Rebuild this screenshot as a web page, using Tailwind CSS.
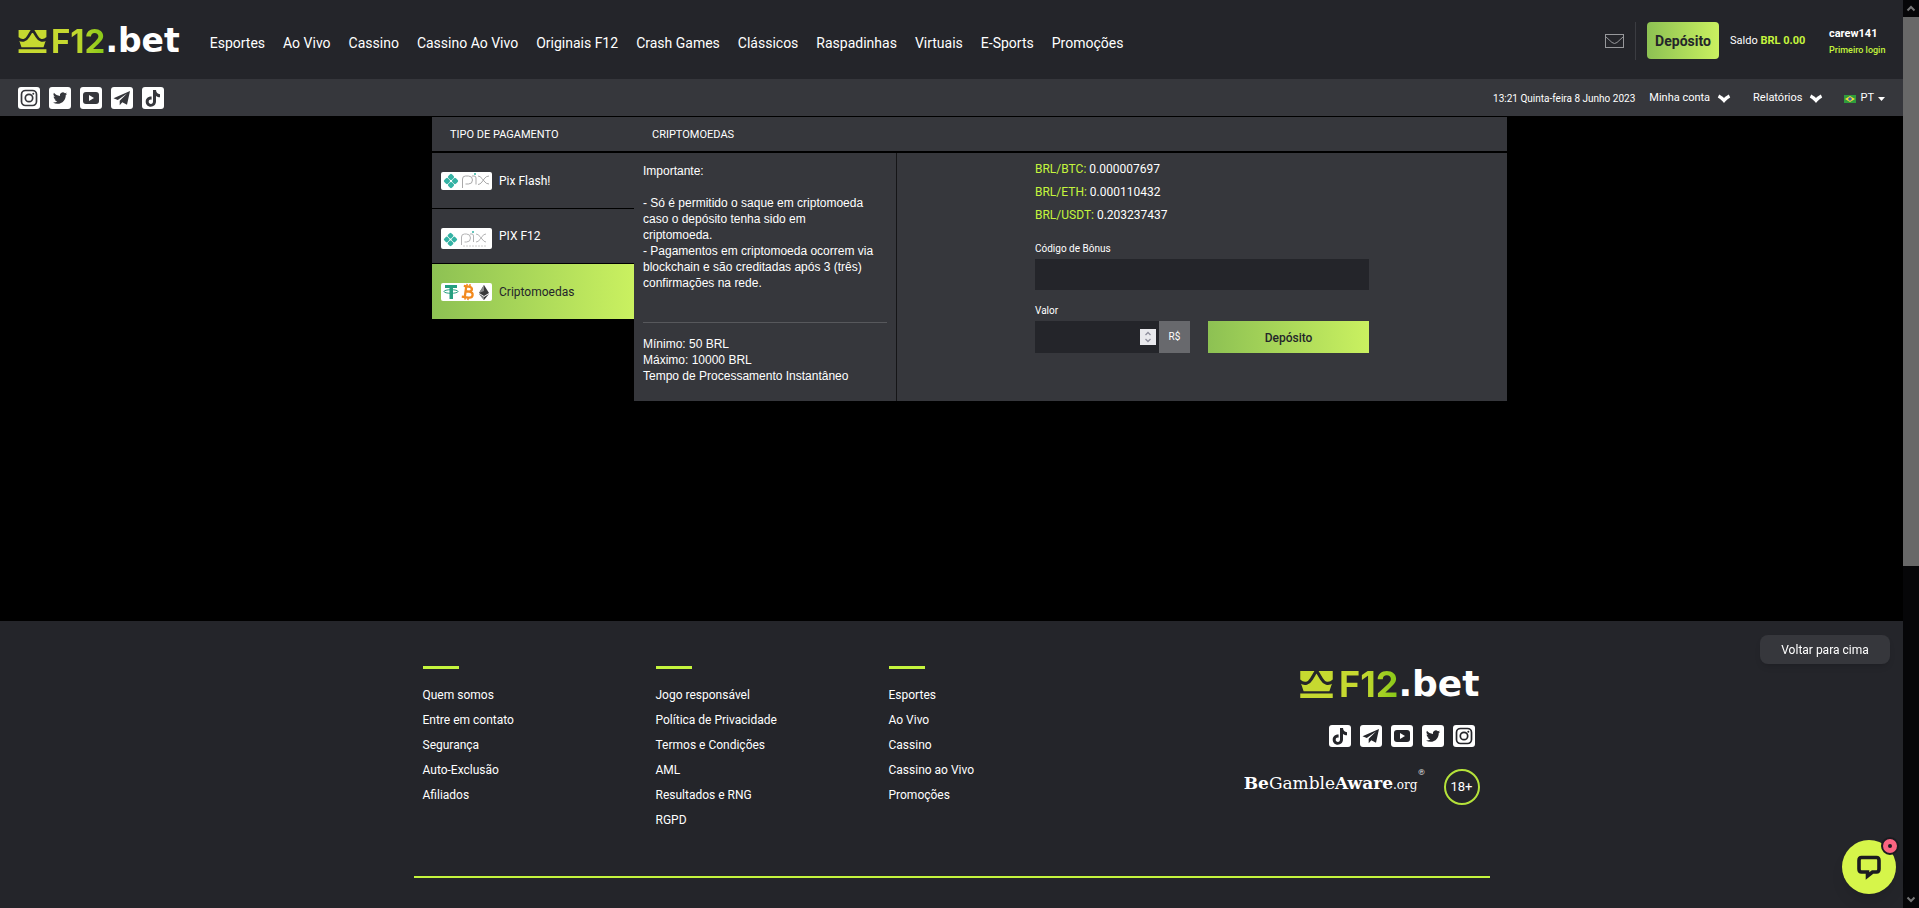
<!DOCTYPE html>
<html lang="pt">
<head>
<meta charset="utf-8">
<title>F12.bet - Depósito</title>
<script src="https://cdn.jsdelivr.net/npm/@tailwindcss/browser@4"></script>
</head>
<body class="bg-black font-[Roboto,sans-serif] text-xs text-white">
<svg class="hidden" aria-hidden="true">
  <symbol id="crown" viewBox="0 0 29 25">
    <path fill="#c6d930" d="M0 1h29v9l-3 9H3l-3-9zM0 21h29v4H0z"/>
    <path fill="none" stroke="#24252a" stroke-width="2.800" stroke-linejoin="round" d="M-1 9.500C4 14 8 11.500 10 8l4.500-7.500L19 8c2 3.500 6 6 11 1.500"/>
    <path fill="#24252a" d="M12 0h5l-2.500 3z"/>
  </symbol>
  <symbol id="instagram" viewBox="0 0 22 22">
    <rect width="22" height="22" rx="3" fill="#fff"/>
    <rect x="3.500" y="3.500" width="15" height="15" rx="4" fill="none" stroke="currentColor" stroke-width="1.700"/>
    <circle cx="11" cy="11" r="3.700" fill="none" stroke="currentColor" stroke-width="1.700"/><circle cx="15.300" cy="6.700" r="1" fill="currentColor"/>
  </symbol>
  <symbol id="twitter" viewBox="0 0 22 22">
    <rect width="22" height="22" rx="3" fill="#fff"/>
    <path fill="currentColor" transform="translate(4 4) scale(.59)" d="M23.950 4.570a10 10 0 0 1-2.820.770 4.960 4.960 0 0 0 2.160-2.720c-.950.550-2 .960-3.120 1.180a4.920 4.920 0 0 0-8.390 4.490C7.690 8.100 4.070 6.130 1.640 3.160a4.930 4.930 0 0 0 1.520 6.570 4.900 4.900 0 0 1-2.230-.610v.060a4.920 4.920 0 0 0 3.950 4.830 5 5 0 0 1-2.210.080 4.940 4.940 0 0 0 4.600 3.420A9.870 9.870 0 0 1 0 19.540a13.990 13.990 0 0 0 7.550 2.210c9.140 0 14.300-7.720 14.010-14.640a10 10 0 0 0 2.390-2.540z"/>
  </symbol>
  <symbol id="youtube" viewBox="0 0 22 22">
    <rect width="22" height="22" rx="3" fill="#fff"/>
    <rect x="3" y="5" width="16" height="12" rx="3" fill="currentColor"/><path fill="#fff" d="M9 8l5 3-5 3z"/>
  </symbol>
  <symbol id="telegram" viewBox="0 0 22 22">
    <rect width="22" height="22" rx="3" fill="#fff"/>
    <path fill="currentColor" d="M19 4L2.500 11.200l4.300 1.700L16 6.500 8.700 13.700v4.500l2.600-3 4.700 2.500z"/>
  </symbol>
  <symbol id="tiktok" viewBox="0 0 22 22">
    <rect width="22" height="22" rx="3" fill="#fff"/>
    <path fill="currentColor" d="M11 3h3c.2 2.500 1.600 4 4 4.200v3c-1.500 0-2.900-.5-4-1.300v5.600c0 3-2.300 5.200-5.200 5.200S3.700 17.500 3.700 14.700c0-3.100 2.600-5.400 5.900-5.100v3.100c-1.700-.4-2.900.6-2.900 2s1 2.200 2.200 2.200c1.300 0 2.100-.9 2.100-2.400z"/>
  </symbol>
  <symbol id="chevron" viewBox="0 0 14 9"><path d="M1.500 2Q4.500 3.500 7 6.500 9.500 3.500 12.500 2" fill="none" stroke="#fff" stroke-width="3.200"/></symbol>
  <symbol id="pixmark" viewBox="0 0 16 16">
    <g fill="#34b2a4" transform="rotate(45 8 8)"><rect x="2.600" y="2.600" width="5.100" height="5.100" rx="1.300"/><rect x="8.300" y="2.600" width="5.100" height="5.100" rx="1.300"/><rect x="2.600" y="8.300" width="5.100" height="5.100" rx="1.300"/><rect x="8.300" y="8.300" width="5.100" height="5.100" rx="1.300"/></g>
  </symbol>
</svg>

<div class="flex min-h-screen">
  <div class="flex min-w-0 flex-1 flex-col">
    <header>
      <div class="flex h-[79px] items-center bg-[#24252a] px-[18px] pt-0.5">
        <a href="#" aria-label="F12.bet" class="flex h-10 shrink-0 items-center text-[33px] leading-10 font-bold">
          <svg class="mr-1 h-6 w-[29px]"><use href="#crown"/></svg>
          <span class="bg-linear-to-r from-[#c6d930] from-40% to-[#86c817] bg-clip-text font-[Inter,sans-serif] text-transparent">F12</span><span class="font-['DejaVu_Sans',sans-serif]">.bet</span>
        </a>
        <nav class="ml-[30px] flex flex-1 gap-[18px] pt-1 text-sm whitespace-nowrap">
          <a href="#">Esportes</a><a href="#">Ao Vivo</a><a href="#">Cassino</a><a href="#">Cassino Ao Vivo</a><a href="#">Originais F12</a><a href="#">Crash Games</a><a href="#">Clássicos</a><a href="#">Raspadinhas</a><a href="#">Virtuais</a><a href="#">E-Sports</a><a href="#">Promoções</a>
        </nav>
        <div class="flex shrink-0 items-center">
          <a href="#" aria-label="Mensagens"><svg class="h-[14px] w-[19px]" viewBox="0 0 19 14" fill="none" stroke="#97989b"><rect x=".5" y=".5" width="18" height="13"/><path d="M.5 2.500l6.500 6q2.500 2 5 0l6.500-6"/></svg></a>
          <div class="mx-[11px] h-[38px] w-px bg-[#3b3c41]"></div>
          <button class="h-[37px] w-[72px] rounded bg-linear-to-r from-[#8dc153] to-[#caf160] text-sm font-bold text-[#24252a]">Depósito</button>
          <p class="ml-[11px] w-[99px] pt-0.5 text-[11px]">Saldo <b class="font-bold text-[#c5f53d]">BRL 0.00</b></p>
          <div class="w-14 pt-0.5 whitespace-nowrap"><p class="text-[11px] leading-4 font-bold">carew141</p><p class="text-[9px] leading-4 font-medium text-[#c5f53d]">Primeiro login</p></div>
        </div>
      </div>
      <div class="flex h-[37px] items-center justify-between bg-[#36373c] px-[18px]">
        <div class="flex gap-[9px] text-[#36373c]">
          <a href="#" aria-label="Instagram"><svg class="size-[22px]"><use href="#instagram"/></svg></a>
          <a href="#" aria-label="Twitter"><svg class="size-[22px]"><use href="#twitter"/></svg></a>
          <a href="#" aria-label="YouTube"><svg class="size-[22px]"><use href="#youtube"/></svg></a>
          <a href="#" aria-label="Telegram"><svg class="size-[22px]"><use href="#telegram"/></svg></a>
          <a href="#" aria-label="TikTok"><svg class="size-[22px]"><use href="#tiktok"/></svg></a>
        </div>
        <div class="flex items-center pt-0.5 text-[11px] whitespace-nowrap">
          <time class="mr-[14px] text-[10px]">13:21 Quinta-feira 8 Junho 2023</time>
          <button class="mr-[22px] flex items-center gap-[7px]">Minha conta <svg class="h-[9px] w-[14px]"><use href="#chevron"/></svg></button>
          <button class="mr-[21px] flex items-center gap-[7px]">Relatórios <svg class="h-[9px] w-[14px]"><use href="#chevron"/></svg></button>
          <button class="flex items-center gap-1"><svg class="h-2 w-3" viewBox="0 0 12 8"><path fill="#2f9c3c" d="M0 0h12v8H0z"/><path fill="#f2dd35" d="M6 1l5 3-5 3-5-3z"/><circle cx="6" cy="4" r="1.800" fill="#3b5fb5"/></svg>PT <svg class="h-1 w-[7px]" viewBox="0 0 7 4"><path d="M0 0h7L3.500 4z" fill="#fff"/></svg></button>
        </div>
      </div>
    </header>

    <main class="min-h-[505px] px-4 pt-px pl-[52px]">
      <div class="mx-auto max-w-[1075px]">
        <div class="flex h-[34px] items-center bg-[#36373c] pt-0.5 pl-[18px] text-[11px]"><h2 class="w-[202px]">TIPO DE PAGAMENTO</h2><h2>CRIPTOMOEDAS</h2></div>
        <div class="mt-0.5 flex items-start">
          <div class="flex w-[202px] shrink-0 flex-col gap-px">
            <button class="flex h-[55px] items-center gap-[7px] bg-[#36373c] pl-[9px]">
              <svg class="h-[18px] w-[51px]" viewBox="0 0 51 18"><rect width="51" height="18" rx="2" fill="#fff"/><use href="#pixmark" x="2" y="1" width="16" height="16"/><path fill="none" stroke="#a9a9aa" d="M21.500 16V7q0-3 3-3h3q4 0 4 4t-4 4h-3M31 4h2q2 0 2 2v6.500M37 4q2 0 4 2.500l2 2.500q2 3 5 3M37 12.500q2 0 4-2.500l2-3q2-3 5-3"/><circle cx="34" cy="2" r="1" fill="#34b2a4"/></svg>Pix Flash!</button>
            <button class="flex h-[54px] items-center gap-[7px] bg-[#36373c] pl-[9px]">
              <svg class="mt-1 h-[21px] w-[51px]" viewBox="0 0 51 21"><rect width="51" height="21" rx="2" fill="#fff"/><use href="#pixmark" x="2" y="4" width="15" height="15"/><path fill="none" stroke="#b3b3b4" d="M20.500 17V9q0-3 3-3h2q4 0 4 4t-4 4h-2M29 6h2q1.500 0 1.500 2v6M35 6q2 0 4 2.500l2 2.500q2 3 4 3M35 14q2 0 4-2.500l2-3q2-2.500 4-2.500"/><path stroke="#ccc" stroke-dasharray="2 1" d="M22 18h24"/><circle cx="32" cy="4" r="1" fill="#34b2a4"/></svg>PIX F12</button>
            <button class="flex h-[55px] items-center gap-[7px] bg-linear-to-r from-[#8dc153] to-[#caf160] pl-[9px] text-[#24252a]">
              <svg class="h-[18px] w-[51px]" viewBox="0 0 51 18"><rect width="51" height="18" rx="2" fill="#fff"/><path fill="#259f80" d="M4 2h12v3h-4v11H8.500V5H4z"/><ellipse cx="10" cy="8.500" rx="7" ry="1.800" fill="none" stroke="#259f80"/><g transform="rotate(8 27 9)" fill="none" stroke="#f28a1f"><path stroke-width="2.300" d="M22 3.500h5q3.500 0 3.500 2.500T27 8.500h-3M24 8.500h4q4 0 4 3T28 14.500h-6.500M24.500 3v12"/><path stroke-width="1.500" d="M25 1v2M28 1v2M25 15v2M28 15v2"/></g><path fill="#39393a" d="M43 2l5 8-5 3-5-3zM43 17l-5-6 5 3 5-3z"/><path fill="#88898a" d="M43 2v6l-5 2zM43 14v3l-5-6z"/></svg>Criptomoedas</button>
          </div>
          <section class="flex min-h-[248px] flex-1 bg-[#36373c]">
            <div class="w-[263px] shrink-0 border-r border-[#151517] px-[9px] pt-[10px] font-['Liberation_Sans',sans-serif] text-xs leading-4">
              <div class="max-w-[234px]">
                <p>Importante:</p><br>
                <p>- Só é permitido o saque em criptomoeda caso o depósito tenha sido em criptomoeda.</p>
                <p>- Pagamentos em criptomoeda ocorrem via blockchain e são creditadas após 3 (três) confirmações na rede.</p>
              </div>
              <hr class="mt-[31px] mb-[13px] border-[#57585c]">
              <p>Mínimo: 50 BRL</p><p>Máximo: 10000 BRL</p><p>Tempo de Processamento Instantâneo</p>
            </div>
            <form class="mx-auto w-[334px] pt-[5px]">
              <p class="leading-[23px]"><span class="text-[#c5f53d]">BRL/BTC:</span> 0.000007697</p>
              <p class="leading-[23px]"><span class="text-[#c5f53d]">BRL/ETH:</span> 0.000110432</p>
              <p class="leading-[23px]"><span class="text-[#c5f53d]">BRL/USDT:</span> 0.203237437</p>
              <label for="bonus" class="mt-3 block h-5 text-[10px] leading-5">Código de Bônus</label>
              <input id="bonus" type="text" class="block h-[31px] w-full bg-[#24252a] px-2">
              <label for="valor" class="mt-[11px] block h-5 text-[10px] leading-5">Valor</label>
              <div class="flex h-8">
                <div class="relative w-[124px]"><input id="valor" type="text" inputmode="numeric" class="h-full w-full bg-[#24252a] px-2">
                  <svg class="absolute top-2 right-[3px] size-4" viewBox="0 0 16 16"><path fill="#e9e9ed" d="M0 0h16v16H0z"/><path fill="none" stroke="#8f8f9d" stroke-width="1.300" d="M5.500 6L8 3.500 10.500 6M5.500 10L8 12.500l2.500-2.500"/></svg></div>
                <span class="w-[31px] bg-[#68696d] text-center text-[10px] leading-8">R$</span>
                <button type="button" class="ml-[18px] flex-1 bg-linear-to-r from-[#8dc153] to-[#caf160] pt-0.5 font-medium text-[#24252a]">Depósito</button>
              </div>
            </form>
          </section>
        </div>
      </div>
    </main>

    <footer class="flex-1 bg-[#24252a] px-4">
      <div class="mx-auto flex h-[257px] max-w-[1076px] justify-between border-b-2 border-[#c5f53d] pt-[45px] pr-[10px] pl-[9px]">
        <div class="flex">
          <ul class="w-[233px] leading-[25px] before:mb-[14px] before:block before:h-[3px] before:w-9 before:bg-[#c5f53d]"><li><a href="#">Quem somos</a></li><li><a href="#">Entre em contato</a></li><li><a href="#">Segurança</a></li><li><a href="#">Auto-Exclusão</a></li><li><a href="#">Afiliados</a></li></ul>
          <ul class="w-[233px] leading-[25px] before:mb-[14px] before:block before:h-[3px] before:w-9 before:bg-[#c5f53d]"><li><a href="#">Jogo responsável</a></li><li><a href="#">Política de Privacidade</a></li><li><a href="#">Termos e Condições</a></li><li><a href="#">AML</a></li><li><a href="#">Resultados e RNG</a></li><li><a href="#">RGPD</a></li></ul>
          <ul class="leading-[25px] before:mb-[14px] before:block before:h-[3px] before:w-9 before:bg-[#c5f53d]"><li><a href="#">Esportes</a></li><li><a href="#">Ao Vivo</a></li><li><a href="#">Cassino</a></li><li><a href="#">Cassino ao Vivo</a></li><li><a href="#">Promoções</a></li></ul>
        </div>
        <div class="flex flex-col items-end">
          <a href="#" aria-label="F12.bet" class="flex h-9 items-center text-4xl leading-9 font-bold">
            <svg class="mr-1.5 h-[28px] w-[33px]"><use href="#crown"/></svg>
            <span class="bg-linear-to-r from-[#c6d930] from-40% to-[#86c817] bg-clip-text font-[Inter,sans-serif] text-transparent">F12</span><span class="font-['DejaVu_Sans',sans-serif]">.bet</span>
          </a>
          <div class="mt-[23px] mr-[5px] flex gap-[9px] text-[#24252a]">
            <a href="#" aria-label="TikTok"><svg class="size-[22px]"><use href="#tiktok"/></svg></a>
            <a href="#" aria-label="Telegram"><svg class="size-[22px]"><use href="#telegram"/></svg></a>
            <a href="#" aria-label="YouTube"><svg class="size-[22px]"><use href="#youtube"/></svg></a>
            <a href="#" aria-label="Twitter"><svg class="size-[22px]"><use href="#twitter"/></svg></a>
            <a href="#" aria-label="Instagram"><svg class="size-[22px]"><use href="#instagram"/></svg></a>
          </div>
          <div class="mt-[22px] flex items-start gap-[18px]">
            <a href="#" class="flex font-['DejaVu_Serif',serif] text-[17px] leading-7"><span><b>Be</b>Gamble<b>Aware</b><span class="text-xs">.org</span></span><span class="text-[8px] leading-[8px]">®</span></a>
            <span class="size-9 rounded-full border-2 border-[#b5e23a] text-center text-[13px] leading-8">18+</span>
          </div>
        </div>
      </div>
    </footer>
  </div>

  <div class="sticky top-0 flex h-screen w-4 shrink-0 flex-col items-center bg-[#060608]" aria-hidden="true">
    <svg class="h-[17px] w-4 shrink-0" viewBox="0 0 16 17"><path d="M4.500 10.500L8 7l3.500 3.500" fill="none" stroke="#777" stroke-width="2"/></svg>
    <div class="w-4 flex-[549] bg-[#686868]"></div>
    <div class="flex-[325]"></div>
    <svg class="h-[17px] w-4 shrink-0" viewBox="0 0 16 17"><path d="M4.500 6.500L8 10l3.500-3.500" fill="none" stroke="#777" stroke-width="2"/></svg>
  </div>
</div>

<button class="fixed right-[29px] bottom-[244px] h-[29px] w-[130px] rounded-lg bg-[#36373c] shadow-md">Voltar para cima</button>
<button aria-label="Chat" class="fixed right-[23px] bottom-[14px] flex size-[54px] items-center justify-center rounded-full bg-[#d6f54a] shadow-lg">
  <svg class="size-[26px]" viewBox="0 0 26 26"><path d="M5.500 3.500h15q2.500 0 2.500 3v8.500q0 3-2.500 3h-4l-5 4V18h-6Q3 18 3 15V6.500q0-3 2.500-3z" fill="none" stroke="#1b1b20" stroke-width="3.600"/></svg>
  <span class="absolute -top-[3px] -right-[3px] flex size-[18px] items-center justify-center rounded-full border-2 border-[#1b1b20] bg-[#fb6481]"><span class="size-1 rounded-full bg-[#1b1b20]"></span></span>
</button>
</body>
</html>
